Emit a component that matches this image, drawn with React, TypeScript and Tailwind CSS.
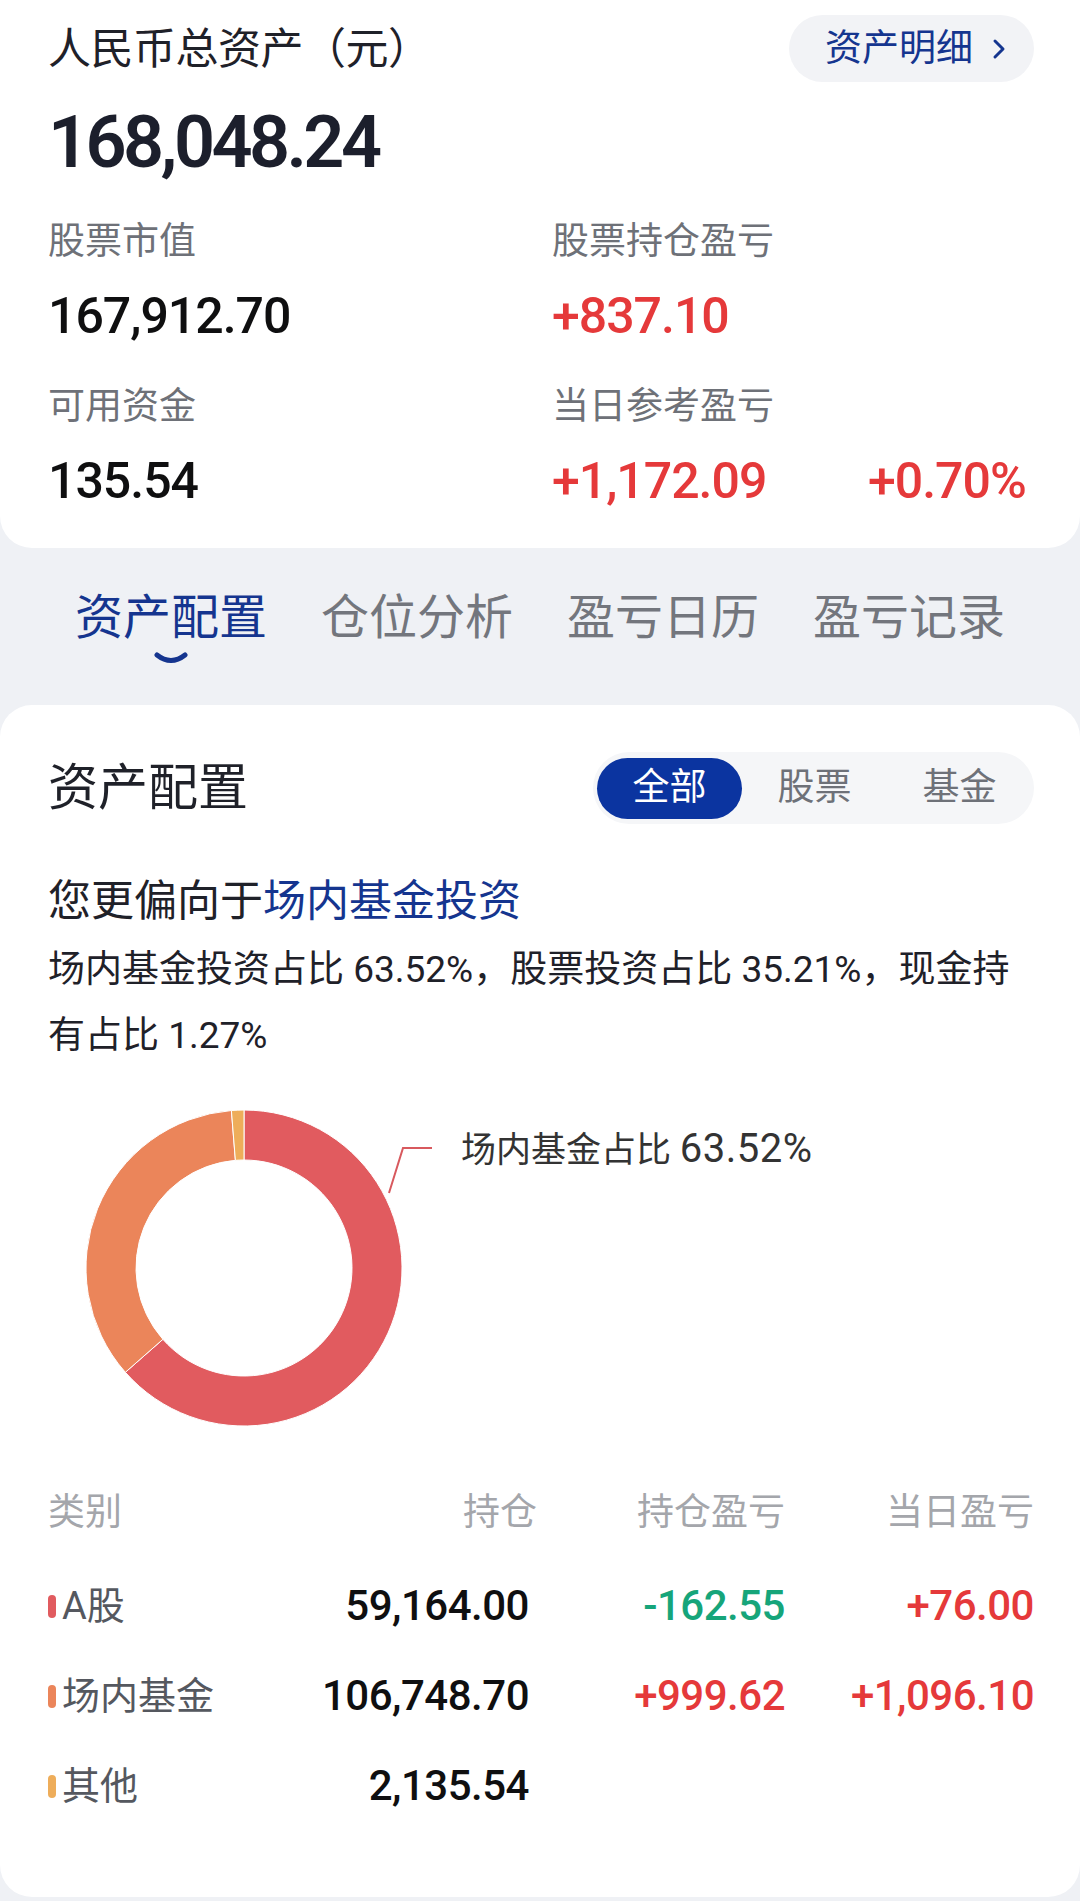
import React from "react";

const RED = "#e5393a";
const GREEN = "#16a57a";

function sector(cx: number, cy: number, r0: number, r1: number, a0: number, a1: number) {
  const rad = (a: number) => ((a - 90) * Math.PI) / 180;
  const p = (r: number, a: number) => [cx + r * Math.cos(rad(a)), cy + r * Math.sin(rad(a))];
  const large = a1 - a0 > 180 ? 1 : 0;
  const [x1, y1] = p(r1, a0);
  const [x2, y2] = p(r1, a1);
  const [x3, y3] = p(r0, a1);
  const [x4, y4] = p(r0, a0);
  return `M${x1} ${y1} A${r1} ${r1} 0 ${large} 1 ${x2} ${y2} L${x3} ${y3} A${r0} ${r0} 0 ${large} 0 ${x4} ${y4} Z`;
}

function Donut() {
  const segs = [
    { v: 63.52, c: "#e15b5f" },
    { v: 35.21, c: "#eb855a" },
    { v: 1.27, c: "#eead5a" },
  ];
  let acc = 0;
  const paths = segs.map((s, i) => {
    const a0 = (acc / 100) * 360;
    acc += s.v;
    const a1 = (acc / 100) * 360;
    return <path key={i} d={sector(159, 159, 108, 158, a0, a1)} fill={s.c} stroke="#ffffff" strokeWidth={1} />;
  });
  return (
    <svg width="350" height="318" viewBox="0 0 350 318" className="shrink-0">
      {paths}
      <polyline points="304,84 318,39 347,39" fill="none" stroke="#d8595e" strokeWidth={2} />
    </svg>
  );
}

function Stat({ label, children }: { label: string; children: React.ReactNode }) {
  return (
    <div className="flex flex-col">
      <div className="text-[37px] leading-[44px] text-[#6e7178]">{label}</div>
      <div className="mt-[24px] text-[50px] leading-[56px] font-medium tracking-[-1px]">{children}</div>
    </div>
  );
}

function Row({ color, name, hold, pl, day }: { color: string; name: string; hold: string; pl?: string; day?: string }) {
  const col = (s?: string) => (s && s.startsWith("-") ? GREEN : RED);
  return (
    <div className="grid h-[90px] grid-cols-[200px_289px_248px_249px] items-center">
      <div className="flex items-center gap-[6px] whitespace-nowrap">
        <span className="h-[23px] w-[8px] rounded-full" style={{ backgroundColor: color }} />
        <span className="text-[38px] leading-[44px] text-[#55585f]">{name}</span>
      </div>
      <div className="pr-[8px] text-right text-[42px] font-medium leading-[50px] tracking-[-0.5px] text-[#0f0f10]">{hold}</div>
      <div className="text-right text-[42px] font-medium leading-[50px] tracking-[-0.5px]" style={{ color: col(pl) }}>
        {pl ?? ""}
      </div>
      <div className="text-right text-[42px] font-medium leading-[50px] tracking-[-0.5px]" style={{ color: col(day) }}>
        {day ?? ""}
      </div>
    </div>
  );
}

export default function App() {
  return (
    <div className="min-h-[1901px] w-[1080px] bg-[#eff1f5] font-['Roboto','Noto_Sans_CJK_SC',sans-serif]">
      {/* Top summary card */}
      <div className="h-[548px] rounded-b-[32px] bg-white pl-[48px] pr-[46px] pt-[15px]">
        <div className="flex h-[67px] items-center justify-between">
          <div className="text-[43px] leading-[50px] tracking-[-0.5px] text-[#1f2129]">人民币总资产（元）</div>
          <div className="flex h-[67px] w-[245px] items-center rounded-full bg-[#f2f3f6] pl-[36px] text-[37px] leading-[44px] text-[#15358f]">
            <span>资产明细</span>
            <svg width="16" height="22" viewBox="0 0 16 22" className="ml-[18px]">
              <path d="M4 3 L12 11 L4 19" fill="none" stroke="#15358f" strokeWidth={3} strokeLinecap="round" strokeLinejoin="round" />
            </svg>
          </div>
        </div>
        <div className="mt-[26px] text-[72px] font-semibold leading-[70px] tracking-[-3.6px] text-[#1c1f2c]">168,048.24</div>
        <div className="mt-[42px] grid grid-cols-[504px_1fr]">
          <Stat label="股票市值">
            <span className="text-[#0f0f10]">167,912.70</span>
          </Stat>
          <Stat label="股票持仓盈亏">
            <span style={{ color: RED }}>+837.10</span>
          </Stat>
        </div>
        <div className="mt-[41px] grid grid-cols-[504px_1fr]">
          <Stat label="可用资金">
            <span className="text-[#0f0f10]">135.54</span>
          </Stat>
          <Stat label="当日参考盈亏">
            <div className="flex" style={{ color: RED }}>
              <span className="w-[316px]">+1,172.09</span>
              <span>+0.70%</span>
            </div>
          </Stat>
        </div>
      </div>

      {/* Tabs */}
      <div className="flex h-[157px] gap-[54px] pl-[75px] pt-[42px]">
        <div className="flex flex-col items-center">
          <span className="text-[48px] leading-[56px] text-[#15358f]">资产配置</span>
          <svg width="36" height="14" viewBox="0 0 36 14" className="mt-[5px]">
            <path d="M4 4 Q18 15 32 4" fill="none" stroke="#15358f" strokeWidth={5} strokeLinecap="round" />
          </svg>
        </div>
        <span className="text-[48px] leading-[56px] text-[#73767d]">仓位分析</span>
        <span className="text-[48px] leading-[56px] text-[#73767d]">盈亏日历</span>
        <span className="text-[48px] leading-[56px] text-[#73767d]">盈亏记录</span>
      </div>

      {/* Allocation card */}
      <div className="h-[1192px] rounded-[32px] bg-white pl-[48px] pr-[46px] pt-[47px]">
        <div className="flex h-[72px] items-center justify-between">
          <div className="text-[50px] leading-[60px] text-[#1f2129]">资产配置</div>
          <div className="flex h-[72px] w-[441px] items-center rounded-full bg-[#f5f6f8] pl-[4px] text-[37px] leading-[44px]">
            <div className="flex h-[61px] w-[145px] items-center justify-center rounded-full bg-[#0b34a0] text-white">全部</div>
            <div className="flex h-[61px] w-[145px] items-center justify-center text-[#6e7178]">股票</div>
            <div className="flex h-[61px] w-[145px] items-center justify-center text-[#6e7178]">基金</div>
          </div>
        </div>

        <div className="mt-[52px] text-[43px] leading-[50px] text-[#1f2129]">
          您更偏向于<span className="text-[#15358f]">场内基金投资</span>
        </div>
        <div className="mt-[11px] max-w-[980px] text-[37px] leading-[66px] text-[#1f2129]">
          场内基金投资占比 63.52%，股票投资占比 35.21%，现金持有占比 1.27%
        </div>

        <div className="mt-[40px] flex items-start pl-[37px]">
          <Donut />
          <div className="ml-[26px] mt-[20px] whitespace-nowrap text-[35px] leading-[40px] text-[#333333]">
            场内基金占比 <span className="text-[40px] tracking-[0.5px]">63.52%</span>
          </div>
        </div>

        <div className="mt-[64px] grid grid-cols-[200px_289px_248px_249px] text-[37px] leading-[44px] text-[#a4a6ab]">
          <div>类别</div>
          <div className="text-right">持仓</div>
          <div className="text-right">持仓盈亏</div>
          <div className="text-right">当日盈亏</div>
        </div>
        <div className="mt-[26px]">
          <Row color="#e15b5f" name="A股" hold="59,164.00" pl="-162.55" day="+76.00" />
          <Row color="#eb855a" name="场内基金" hold="106,748.70" pl="+999.62" day="+1,096.10" />
          <Row color="#eead5a" name="其他" hold="2,135.54" />
        </div>
      </div>
    </div>
  );
}
